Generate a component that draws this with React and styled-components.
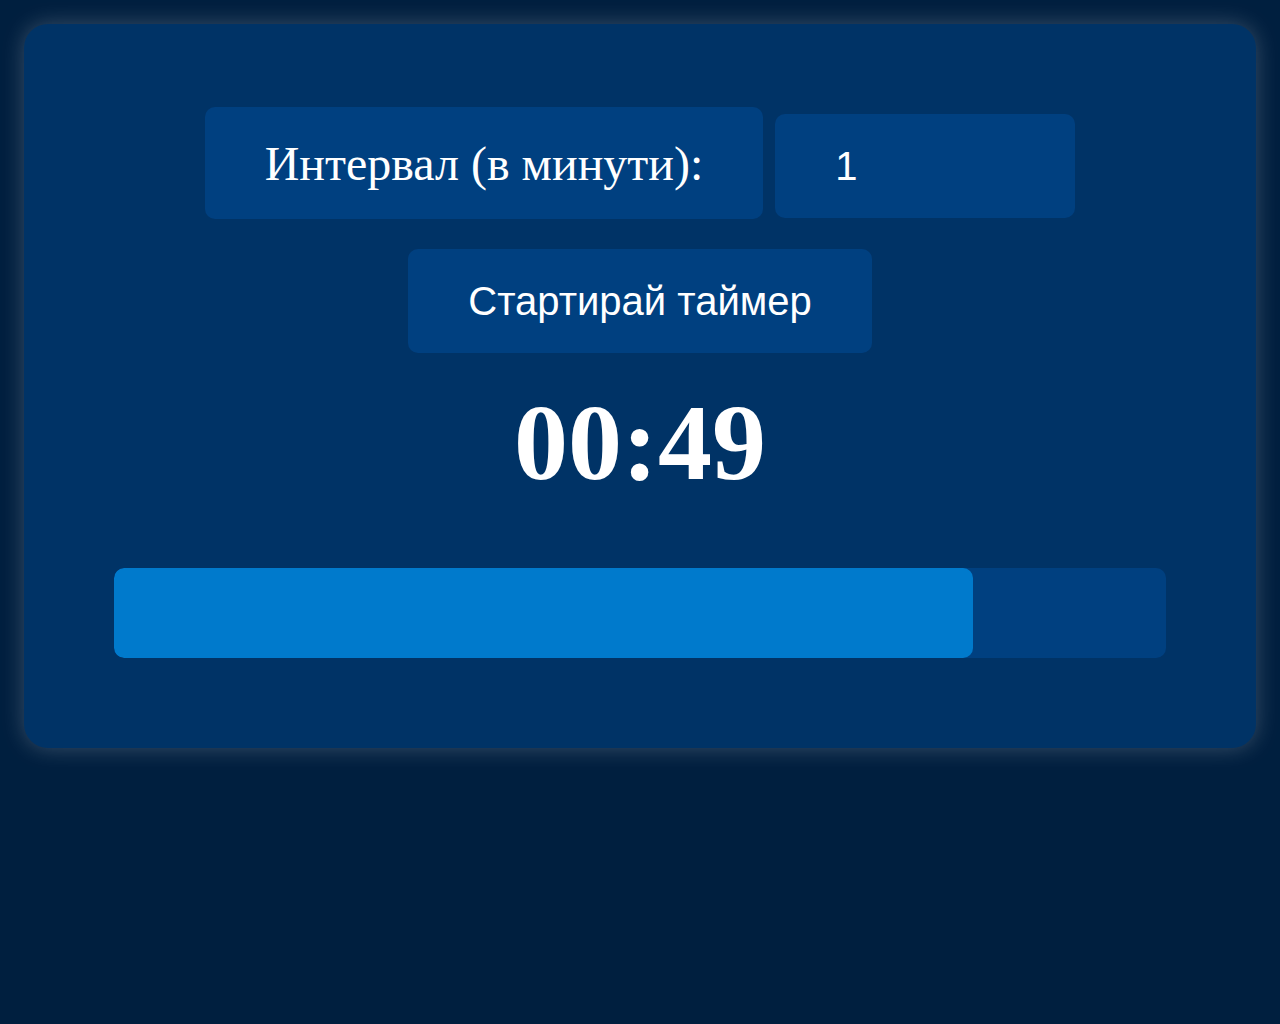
import React, { useState } from 'react';
import styled, { createGlobalStyle } from 'styled-components';

const GlobalStyle = createGlobalStyle`
  html, body {
    margin: 0;
    padding: 0;
    background: #001f3f;
    min-height: 100vh;
  }
  body {
    font-family: 'Liberation Sans', Arial, sans-serif;
    color: #ffffff;
  }
`;

const Page = styled.div`
  padding: 24px;
`;

const Card = styled.div`
  background: #003366;
  border-radius: 24px;
  box-shadow: 0 0 22px rgba(255, 255, 255, 0.22);
  padding: 83px 90px 90px;
  display: flex;
  flex-direction: column;
  align-items: center;
`;

const Row = styled.div`
  display: flex;
  align-items: flex-start;
  gap: 12px;
`;

const Label = styled.label`
  background: #004080;
  border-radius: 10px;
  padding: 0 60px;
  height: 112px;
  display: flex;
  align-items: center;
  font-family: 'Liberation Serif', 'Times New Roman', serif;
  font-size: 48px;
`;

const Input = styled.input`
  margin-top: 7px;
  width: 300px;
  height: 104px;
  box-sizing: border-box;
  background: #004080;
  border: none;
  border-radius: 10px;
  padding: 0 60px;
  color: #ffffff;
  font-family: 'Liberation Sans', Arial, sans-serif;
  font-size: 40px;
  outline: none;
`;

const Button = styled.button`
  margin-top: 30px;
  height: 104px;
  padding: 0 60px;
  background: #004080;
  border: none;
  border-radius: 10px;
  color: #ffffff;
  font-family: 'Liberation Sans', Arial, sans-serif;
  font-size: 40px;
  cursor: pointer;
`;

const Clock = styled.div`
  margin-top: 30px;
  font-family: 'Liberation Serif', 'Times New Roman', serif;
  font-weight: bold;
  font-size: 108px;
  line-height: 120px;
`;

const Track = styled.div`
  margin-top: 65px;
  align-self: stretch;
  height: 90px;
  background: #004080;
  border-radius: 10px;
  overflow: hidden;
`;

const Fill = styled.div`
  height: 100%;
  background: #007acc;
  border-radius: 10px;
`;

export default function App() {
  const [minutes, setMinutes] = useState('1');
  const total = 60;
  const left = 49;
  const mm = String(Math.floor(left / 60)).padStart(2, '0');
  const ss = String(left % 60).padStart(2, '0');

  return (
    <Page>
      <GlobalStyle />
      <Card>
        <Row>
          <Label htmlFor="interval">Интервал (в минути):</Label>
          <Input
            id="interval"
            type="number"
            value={minutes}
            onChange={(e) => setMinutes(e.target.value)}
          />
        </Row>
        <Button>Стартирай таймер</Button>
        <Clock>{mm}:{ss}</Clock>
        <Track>
          <Fill style={{ width: `${(left / total) * 100}%` }} />
        </Track>
      </Card>
    </Page>
  );
}
